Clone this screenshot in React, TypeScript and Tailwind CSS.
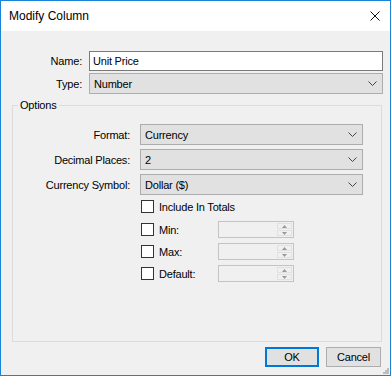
import type { ReactNode } from 'react';

function Chevron() {
  return (
    <svg width="9" height="5" viewBox="0 0 9 5" className="shrink-0">
      <path d="M0.5 0.5 L4.5 4.5 L8.5 0.5" fill="none" stroke="#444" strokeWidth="1" />
    </svg>
  );
}

function Select({ value, width, height = 21 }: { value: string; width: string; height?: number }) {
  return (
    <div
      className={`${width} flex items-center justify-between border border-[#adadad] bg-[#e1e1e1] pl-[4px] pr-[5px]`}
      style={{ height }}
    >
      <span>{value}</span>
      <Chevron />
    </div>
  );
}

function Checkbox() {
  return <div className="h-[13px] w-[13px] shrink-0 border border-[#333333] bg-white" />;
}

function Spinner() {
  return (
    <div className="flex h-[17px] w-[76px] items-stretch justify-end border border-[#c4c4c4] bg-[#f0f0f0] p-[1px]">
      <div className="flex w-[15px] flex-col gap-[1px]">
        <div className="flex flex-1 items-center justify-center border border-[#e1e1e1] bg-[#f0f0f0]">
          <svg width="5" height="3" viewBox="0 0 5 3">
            <path d="M0 3 L2.5 0 L5 3 Z" fill="#9a9a9a" />
          </svg>
        </div>
        <div className="flex flex-1 items-center justify-center border border-[#e1e1e1] bg-[#f0f0f0]">
          <svg width="5" height="3" viewBox="0 0 5 3">
            <path d="M0 0 L2.5 3 L5 0 Z" fill="#9a9a9a" />
          </svg>
        </div>
      </div>
    </div>
  );
}

function FieldRow({ label, children }: { label: string; children: ReactNode }) {
  return (
    <div className="flex items-center">
      <span className="mr-[10px] w-[117px] text-right">{label}</span>
      {children}
    </div>
  );
}

function CheckRow({ label }: { label: string }) {
  return (
    <div className="flex h-[17px] items-center">
      <div className="ml-[128px]">
        <Checkbox />
      </div>
      <span className="ml-[5px] w-[59px]">{label}</span>
      <Spinner />
    </div>
  );
}

function Grip() {
  return (
    <svg width="7" height="7" viewBox="0 0 7 7" className="absolute bottom-[1px] right-[1px]">
      <rect x="5" y="1" width="2" height="2" fill="#bdbdbd" />
      <rect x="3" y="3" width="2" height="2" fill="#bdbdbd" />
      <rect x="5" y="3" width="2" height="2" fill="#bdbdbd" />
      <rect x="1" y="5" width="2" height="2" fill="#bdbdbd" />
      <rect x="3" y="5" width="2" height="2" fill="#bdbdbd" />
      <rect x="5" y="5" width="2" height="2" fill="#bdbdbd" />
    </svg>
  );
}

export default function App() {
  return (
    <div className="flex h-[376px] w-[391px] flex-col border border-[#1883d7] bg-[#f0f0f0] font-['Liberation_Sans',Arial,sans-serif] text-[11px] leading-[14px] tracking-[-0.2px] text-black">
      <div className="flex h-[30px] shrink-0 items-center justify-between bg-white pl-[8px] pr-[10px] text-[12px] tracking-normal">
        <span>Modify Column</span>
        <svg width="10" height="10" viewBox="0 0 10 10">
          <path d="M0.5 0.5 L9.5 9.5 M9.5 0.5 L0.5 9.5" stroke="#111" strokeWidth="1" />
        </svg>
      </div>

      <div className="relative flex flex-1 flex-col">
        <div className="mt-[20px] flex h-[20px] items-center">
          <span className="w-[81px] text-right">Name:</span>
          <div className="ml-[7px] flex h-[20px] w-[294px] items-center border border-[#7a7a7a] bg-white pl-[3px]">
            Unit Price
          </div>
        </div>
        <div className="mt-[2px] flex items-center">
          <span className="w-[81px] text-right">Type:</span>
          <div className="ml-[7px]">
            <Select value="Number" width="w-[294px]" />
          </div>
        </div>

        <fieldset className="ml-[11px] mt-[3px] h-[245px] w-[370px] border border-[#dcdcdc]">
          <legend className="ml-[5px] px-[2px] leading-[16px]">Options</legend>
          <div className="flex flex-col pt-[11px]">
            <div className="flex flex-col gap-[4px]">
              <FieldRow label="Format:">
                <Select value="Currency" width="w-[223px]" />
              </FieldRow>
              <FieldRow label="Decimal Places:">
                <Select value="2" width="w-[223px]" />
              </FieldRow>
              <FieldRow label="Currency Symbol:">
                <Select value="Dollar ($)" width="w-[223px]" />
              </FieldRow>
            </div>
            <div className="mt-[5px] flex h-[13px] items-center">
              <div className="ml-[128px]">
                <Checkbox />
              </div>
              <span className="ml-[5px]">Include In Totals</span>
            </div>
            <div className="mt-[8px] flex flex-col gap-[5px]">
              <CheckRow label="Min:" />
              <CheckRow label="Max:" />
              <CheckRow label="Default:" />
            </div>
          </div>
        </fieldset>

        <div className="mr-[9px] mt-[5px] flex justify-end gap-[7px]">
          <button className="h-[20px] w-[54px] border-2 border-[#0078d7] bg-[#e1e1e1]">OK</button>
          <button className="h-[20px] w-[55px] border border-[#adadad] bg-[#e1e1e1]">Cancel</button>
        </div>
        <Grip />
      </div>
    </div>
  );
}
